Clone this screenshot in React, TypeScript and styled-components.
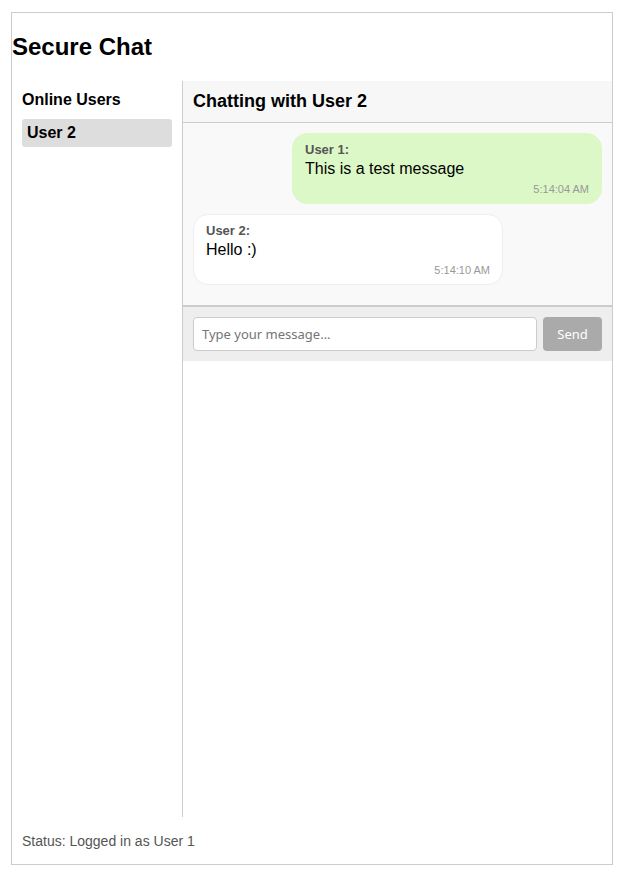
import styled, { createGlobalStyle } from "styled-components";

const GlobalStyle = createGlobalStyle`
  body {
    margin: 0;
    font-family: "Liberation Sans", Arial, sans-serif;
    color: #000;
    background: #fff;
  }
`;

type Message = { id: number; from: string; text: string; time: string; mine: boolean };

const messages: Message[] = [
  { id: 1, from: "User 1", text: "This is a test message", time: "5:14:04 AM", mine: true },
  { id: 2, from: "User 2", text: "Hello :)", time: "5:14:10 AM", mine: false },
];

const App = () => {
  return (
    <Page>
      <GlobalStyle />
      <Container>
        <Title>Secure Chat</Title>
        <Main>
          <Sidebar>
            <SidebarTitle>Online Users</SidebarTitle>
            <UserItem>User 2</UserItem>
          </Sidebar>
          <ChatArea>
            <ChatHeader>Chatting with User 2</ChatHeader>
            <Messages>
              {messages.map((m) => (
                <Bubble key={m.id} $mine={m.mine}>
                  <Sender>{m.from}:</Sender>
                  <Text>{m.text}</Text>
                  <Time>{m.time}</Time>
                </Bubble>
              ))}
            </Messages>
            <InputRow>
              <MessageInput placeholder="Type your message..." />
              <SendButton disabled>Send</SendButton>
            </InputRow>
          </ChatArea>
        </Main>
        <Status>Status: Logged in as User 1</Status>
      </Container>
    </Page>
  );
};

const Page = styled.div`
  padding: 12px 0 0 11px;
`;

const Container = styled.div`
  width: 602px;
  box-sizing: border-box;
  border: 1px solid #ccc;
`;

const Title = styled.h1`
  font-size: 24px;
  font-weight: bold;
  margin: 20px 0;
`;

const Main = styled.div`
  display: flex;
  height: calc(100vh - 140px);
`;

const Sidebar = styled.div`
  width: 150px;
  flex-shrink: 0;
  padding: 10px;
  border-right: 1px solid #ccc;
`;

const SidebarTitle = styled.h3`
  font-size: 16px;
  margin: 0 0 10px;
`;

const UserItem = styled.div`
  background: #ddd;
  border-radius: 3px;
  padding: 5px;
  font-weight: bold;
  font-size: 16px;
`;

const ChatArea = styled.div`
  flex: 1;
  display: flex;
  flex-direction: column;
  min-width: 0;
`;

const ChatHeader = styled.div`
  background: #f7f7f7;
  border-bottom: 1px solid #ccc;
  padding: 10px;
  font-size: 18px;
  font-weight: bold;
`;

const Messages = styled.div`
  background: #f9f9f9;
  padding: 10px;
  display: flex;
  flex-direction: column;
`;

const Bubble = styled.div<{ $mine: boolean }>`
  width: 284px;
  padding: 8px 12px;
  margin-bottom: 10px;
  border-radius: 15px;
  align-self: ${(p) => (p.$mine ? "flex-end" : "flex-start")};
  background: ${(p) => (p.$mine ? "#dcf8c6" : "#fff")};
  border: 1px solid ${(p) => (p.$mine ? "#dcf8c6" : "#eee")};
`;

const Sender = styled.div`
  font-size: 13px;
  font-weight: bold;
  color: #555;
  margin-bottom: 3px;
`;

const Text = styled.div`
  font-size: 16px;
`;

const Time = styled.div`
  font-size: 11px;
  color: #999;
  text-align: right;
  margin-top: 5px;
`;

const InputRow = styled.div`
  display: flex;
  gap: 6px;
  padding: 10px;
  background: #eee;
  border-top: 2px solid #ccc;
`;

const MessageInput = styled.input`
  flex: 1;
  height: 34px;
  box-sizing: border-box;
  padding: 0 8px;
  border: 1px solid #ccc;
  border-radius: 4px;
  font-family: "Noto Sans", sans-serif;
  font-size: 13px;
  &::placeholder {
    color: #757575;
  }
`;

const SendButton = styled.button`
  width: 59px;
  height: 34px;
  border: none;
  border-radius: 4px;
  background: #aaa;
  color: #fff;
  font-family: "Noto Sans", sans-serif;
  font-size: 13px;
`;

const Status = styled.div`
  padding: 16px 10px 15px;
  font-size: 14px;
  color: #555;
`;

export default App;
